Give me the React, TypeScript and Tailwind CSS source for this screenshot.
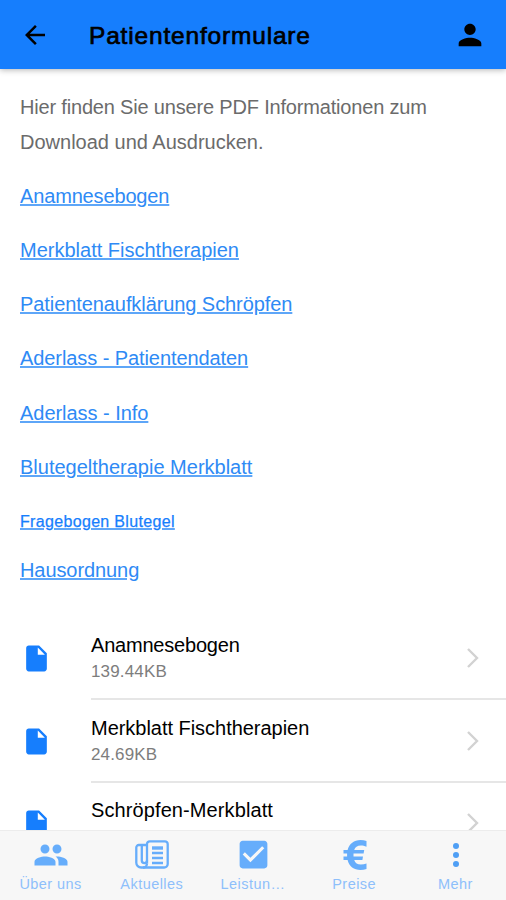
import type { ReactNode } from "react";

const links = [
  { label: "Anamnesebogen", className: "tracking-[-0.15px]" },
  { label: "Merkblatt Fischtherapien", className: "tracking-normal" },
  { label: "Patientenaufklärung Schröpfen", className: "tracking-[-0.08px]" },
  { label: "Aderlass - Patientendaten", className: "tracking-[-0.08px]" },
  { label: "Aderlass - Info", className: "tracking-[-0.04px]" },
  { label: "Blutegeltherapie Merkblatt", className: "tracking-normal" },
];

const files = [
  { name: "Anamnesebogen", size: "139.44KB", className: "tracking-[-0.2px]" },
  { name: "Merkblatt Fischtherapien", size: "24.69KB", className: "tracking-[-0.03px]" },
  { name: "Schröpfen-Merkblatt", size: "", className: "tracking-[0.1px]" },
];

// @component: Header
const Header = () => (
  <header className="relative z-10 h-[69px] shrink-0 bg-[#167efd] shadow-[0_1px_6px_rgba(0,0,0,0.3)] flex items-center pl-[20px] pr-[19px] text-black">
    <svg viewBox="0 0 24 24" className="w-[30px] h-[30px]" fill="currentColor">
      <path d="M20 11H7.83l5.59-5.59L12 4l-8 8 8 8 1.41-1.41L7.83 13H20v-2z" />
    </svg>
    <h1 className="ml-[39px] pt-[3px] text-[24.5px] leading-[30px] font-normal tracking-[0.82px] [-webkit-text-stroke:0.7px_black] whitespace-nowrap">
      Patientenformulare
    </h1>
    <svg viewBox="0 0 24 24" className="ml-auto w-[34px] h-[34px]" fill="currentColor">
      <path d="M12 12c2.21 0 4-1.79 4-4s-1.79-4-4-4-4 1.79-4 4 1.79 4 4 4zm0 2c-2.67 0-8 1.34-8 4v2h16v-2c0-2.66-5.33-4-8-4z" />
    </svg>
  </header>
);

// @component: FileRow
const FileRow = ({ name, size, className }: { name: string; size: string; className: string }) => (
  <li className="flex h-[82.5px] shrink-0">
    <div className="w-[91px] shrink-0 pl-[21px] pt-[25.5px]">
      <svg viewBox="0 0 24 24" className="w-[31px] h-[31px]" fill="#167efd">
        <path d="M6 2c-1.1 0-2 .9-2 2v16c0 1.1.9 2 2 2h12c1.1 0 2-.9 2-2V8l-6-6H6zm7 7V3.5L18.5 9H13z" />
      </svg>
    </div>
    <div className="flex flex-1 justify-between border-b-2 border-[#e6e6e6]">
      <div className="pt-[14.5px]">
        <p className={`text-[20px] leading-[27px] text-black ${className}`}>{name}</p>
        {size && <p className="text-[17px] leading-[26px] tracking-[0.15px] text-[#7d7d7d]">{size}</p>}
      </div>
      <svg viewBox="0 0 12 20" className="mr-[27px] mt-[30.5px] h-[20px] w-[12px]" fill="none" stroke="#d2d2d2" strokeWidth="2.4">
        <path d="M1 1l9 9-9 9" />
      </svg>
    </div>
  </li>
);

// @component: Tab
const Tab = ({ label, children }: { label: string; children: ReactNode }) => (
  <button className="flex w-1/5 flex-col items-center pt-[5px] text-[#66adfb]">
    <span className="flex h-[37px] items-center justify-center">{children}</span>
    <span className="pt-[1px] text-[14.5px] leading-[20px] tracking-[0.45px] text-[#8ebffb]">{label}</span>
  </button>
);

// @component: TabBar
const TabBar = () => (
  <nav className="relative z-10 flex h-[70px] shrink-0 border-t border-[#ececec] bg-[#f7f7f7]">
    <Tab label="Über uns">
      <svg viewBox="0 0 24 24" className="w-[36px] h-[36px]" fill="currentColor">
        <path d="M16 11c1.66 0 2.99-1.34 2.99-3S17.66 5 16 5s-3 1.34-3 3 1.34 3 3 3zm-8 0c1.66 0 2.99-1.34 2.99-3S9.66 5 8 5 5 6.34 5 8s1.34 3 3 3zm0 2c-2.33 0-7 1.17-7 3.5V19h14v-2.5c0-2.33-4.67-3.5-7-3.5zm8 0c-.29 0-.62.02-.97.05 1.16.84 1.97 1.97 1.97 3.45V19h6v-2.5c0-2.33-4.67-3.5-7-3.5z" />
      </svg>
    </Tab>
    <Tab label="Aktuelles">
      <svg viewBox="0 0 34 29" className="w-[34px] h-[29px]" fill="none" stroke="currentColor" strokeWidth="2.3">
        <path d="M12 23.5V4a2.7 2.7 0 0 1 2.7-2.7H30A2.7 2.7 0 0 1 32.7 4v20a3.5 3.5 0 0 1-3.5 3.5h-23a4.8 4.8 0 0 1-4.900-4.800V7.500A2.500 2.500 0 0 1 3.800 5H12" />
        <path d="M6.8 5v15.5a2.6 2.6 0 0 0 5.2 0M12 23.5a4 4 0 0 1-4 4" />
        <path d="M17 8h11" strokeWidth="3.4" />
        <path d="M17 13h11M17 18h11M17 23h11" />
      </svg>
    </Tab>
    <Tab label="Leistun…">
      <svg viewBox="0 0 24 24" className="ml-[1px] w-[37px] h-[37px]" fill="currentColor">
        <path d="M19 3H5c-1.11 0-2 .9-2 2v14c0 1.1.89 2 2 2h14c1.11 0 2-.9 2-2V5c0-1.1-.89-2-2-2zm-9 14l-5-5 1.41-1.41L10 14.17l7.59-7.59L19 8l-9 9z" />
      </svg>
    </Tab>
    <Tab label="Preise">
      <svg viewBox="0 0 24 30" className="ml-[2px] w-[24px] h-[30px]" fill="currentColor">
        <path d="M23.5 1v5.8c-2-.8-3.7-1.3-5.7-1.3-3.5 0-5.7 1.7-6.6 4.5h10l-.6 3.5H10.5v3h9.5l-.6 3.5h-8.2c.9 3 3.3 4.500 6.700 4.500 2 0 3.800-.4 5.600-1V29c-1.900.7-3.900 1-6.100 1C11 30 6 26.500 4.600 20H.5v-3.500h3.600v-3H.5V10h4.100C6.300 3.800 11 0 17.500 0c2.200 0 4.200.3 6 1z" />
      </svg>
    </Tab>
    <Tab label="Mehr">
      <svg viewBox="0 0 8 26" className="ml-[2px] w-[8px] h-[26px]" fill="#4f9ff5">
        <circle cx="4" cy="4" r="3" />
        <circle cx="4" cy="13" r="3" />
        <circle cx="4" cy="22" r="3" />
      </svg>
    </Tab>
  </nav>
);

export default function App() {
  return (
    <div className="flex h-screen w-full flex-col overflow-hidden bg-white font-['Liberation_Sans',Arial,sans-serif]">
      <Header />
      <main className="min-h-0 flex-1 overflow-hidden">
        <div className="px-[20px] pt-[21px] text-[20px] leading-[34.5px] text-[#6b6b6b]">
          <p className="mb-[20px]">
            <span className="tracking-[-0.18px]">Hier finden Sie unsere PDF Informationen zum</span>
            <br />
            Download und Ausdrucken.
          </p>
          {links.map(({ label, className }) => (
            <p key={label} className="mb-[19.65px]">
              <a className={`text-[#2e8af5] underline decoration-[#5ea6f8] decoration-[1.5px] underline-offset-1 ${className}`}>{label}</a>
            </p>
          ))}
          <p className="mb-[16.4px] pt-[4.6px] text-[16px] leading-[28px] tracking-[0.33px]">
            <a className="text-[#167efd] underline decoration-[#5ea6f8] decoration-[1.5px] underline-offset-1 [-webkit-text-stroke:0.25px_#167efd]">
              Fragebogen Blutegel
            </a>
          </p>
          <p>
            <a className="text-[#2e8af5] underline decoration-[#5ea6f8] decoration-[1.5px] underline-offset-1 tracking-[-0.08px]">Hausordnung</a>
          </p>
        </div>
        <ul className="mt-[30.3px]">
          {files.map((file) => (
            <FileRow key={file.name} {...file} />
          ))}
        </ul>
      </main>
      <TabBar />
    </div>
  );
}
